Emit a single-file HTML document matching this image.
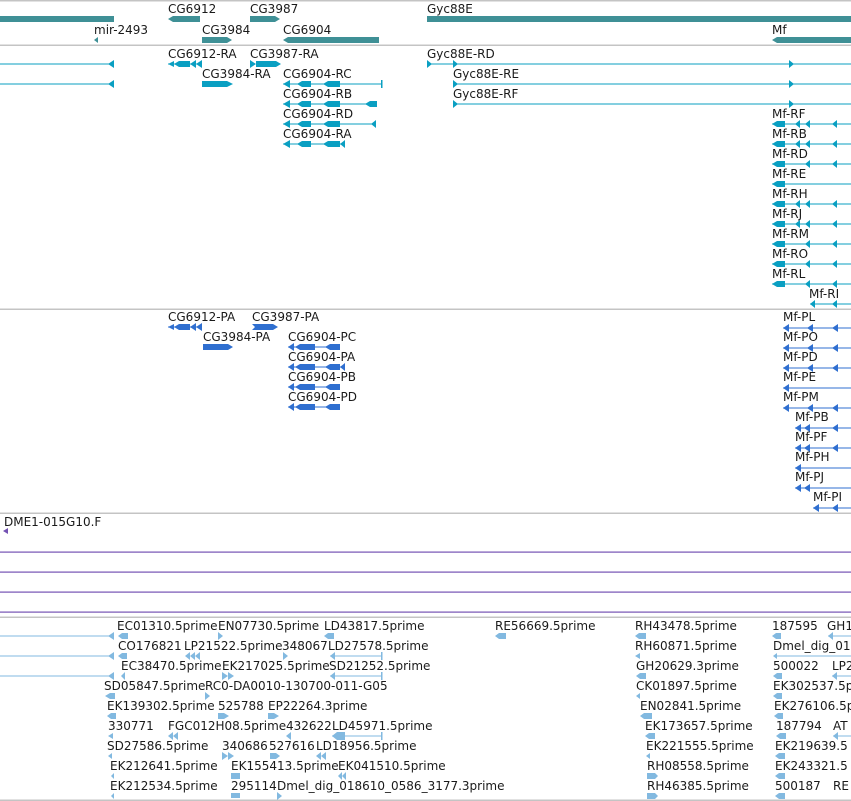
<!DOCTYPE html>
<html><head><meta charset="utf-8"><style>
html,body{margin:0;padding:0;background:#fff;width:851px;height:801px;overflow:hidden}
svg{display:block}
text{font-family:"DejaVu Sans","Liberation Sans",sans-serif;font-size:12px;fill:#1a1a1a}
.g{fill:#3f9096}.t{fill:#0a9fc2}.p{fill:#2f6fd0}.e{fill:#82b9e0}.v{fill:#7452b3}
</style></head><body>
<svg width="851" height="801" viewBox="0 0 851 801">
<!-- separators -->
<rect x="0" y="0" width="851" height="1.5" fill="#c4c4c4"/>
<rect x="0" y="44.5" width="851" height="1.5" fill="#c4c4c4"/>
<rect x="0" y="308.5" width="851" height="1.5" fill="#c4c4c4"/>
<rect x="0" y="512.5" width="851" height="1.5" fill="#c4c4c4"/>
<rect x="0" y="616.5" width="851" height="1.5" fill="#c4c4c4"/>
<rect x="0" y="799.5" width="851" height="1.5" fill="#c4c4c4"/>

<!-- genes -->
<g class="g">
<rect x="0" y="16" width="114" height="6"/>
<polygon points="168,19 173,16 200,16 200,22 173,22"/>
<polygon points="250,16 275,16 280,19 275,22 250,22"/>
<rect x="427" y="16" width="424" height="6"/>
<polygon points="94,40 98,37 98,43"/>
<polygon points="202,37 227,37 232,40 227,43 202,43"/>
<polygon points="283,40 288,37 379,37 379,43 288,43"/>
<polygon points="772,40 777,37 851,37 851,43 777,43"/>
</g>
<text x="168" y="13">CG6912</text><text x="250" y="13">CG3987</text><text x="427" y="13">Gyc88E</text>
<text x="94" y="34">mir-2493</text><text x="202" y="34">CG3984</text><text x="283" y="34">CG6904</text><text x="772" y="34">Mf</text>

<!-- transcripts -->
<g class="t">
<rect x="0" y="63.5" width="114" height="1"/><polygon points="108,64 114,60 114,68"/>
<rect x="0" y="83.5" width="114" height="1"/><polygon points="108,84 114,80 114,88"/>
<rect x="168" y="63.5" width="34" height="1"/><polygon points="168,64 174,61 174,67"/><polygon points="174,64 179,61 190,61 190,67 179,67"/><polygon points="190,64 196,60 196,68"/><polygon points="196,64 202,60 202,68"/>
<polygon points="250,60 256,64 250,68"/><polygon points="256,61 276,61 281,64 276,67 256,67"/>
<rect x="427" y="63.5" width="424" height="1"/><polygon points="427,60 432,64 427,68"/><polygon points="453,60 458,64 453,68"/><polygon points="789,60 794,64 789,68"/>
<polygon points="202,81 227,81 233,84 227,87 202,87"/>
<rect x="453" y="83.5" width="398" height="1"/><polygon points="453,80 458,84 453,88"/><polygon points="789,80 794,84 789,88"/>
<rect x="453" y="103.5" width="398" height="1"/><polygon points="453,100 458,104 453,108"/><polygon points="789,100 794,104 789,108"/>
<!-- CG6904 -->
<rect x="283" y="83.5" width="99" height="1"/><polygon points="283,84 290,80 290,88"/><polygon points="297,84 302,81 311,81 311,87 302,87"/><polygon points="323,84 328,81 340,81 340,87 328,87"/><rect x="381" y="80" width="1.5" height="8"/>
<rect x="283" y="103.5" width="94" height="1"/><polygon points="283,104 290,100 290,108"/><polygon points="297,104 302,101 311,101 311,107 302,107"/><polygon points="323,104 328,101 340,101 340,107 328,107"/><polygon points="365,104 370,101 377,101 377,107 370,107"/>
<rect x="283" y="123.5" width="93" height="1"/><polygon points="283,124 290,120 290,128"/><polygon points="297,124 302,121 311,121 311,127 302,127"/><polygon points="323,124 328,121 340,121 340,127 328,127"/><polygon points="371,124 376,120 376,128"/>
<rect x="283" y="143.5" width="62" height="1"/><polygon points="283,144 290,140 290,148"/><polygon points="297,144 302,141 311,141 311,147 302,147"/><polygon points="323,144 328,141 340,141 340,147 328,147"/><polygon points="340,144 345,140 345,148"/>
<!-- Mf -->
<g id="mf1"><rect x="772" y="123.5" width="79" height="1"/><polygon points="772,124 777,121 785,121 785,127 777,127"/><polygon points="795,124 800,120 800,128"/><polygon points="805,124 810,120 810,128"/><polygon points="832,124 837,120 837,128"/></g>
<use href="#mf1" y="20"/>
<g transform="translate(0,40)"><rect x="772" y="123.5" width="79" height="1"/><polygon points="772,124 777,121 785,121 785,127 777,127"/><polygon points="805,124 810,120 810,128"/><polygon points="832,124 837,120 837,128"/></g>
<g transform="translate(0,60)"><rect x="772" y="123.5" width="79" height="1"/><polygon points="772,124 777,121 785,121 785,127 777,127"/></g>
<use href="#mf1" y="80"/><use href="#mf1" y="100"/>
<g transform="translate(0,120)"><rect x="772" y="123.5" width="79" height="1"/><polygon points="772,124 777,121 785,121 785,127 777,127"/><polygon points="805,124 810,120 810,128"/><polygon points="832,124 837,120 837,128"/></g>
<g transform="translate(0,140)"><rect x="772" y="123.5" width="79" height="1"/><polygon points="772,124 777,121 785,121 785,127 777,127"/><polygon points="805,124 810,120 810,128"/><polygon points="832,124 837,120 837,128"/></g>
<g transform="translate(0,160)"><rect x="772" y="123.5" width="79" height="1"/><polygon points="772,124 777,121 785,121 785,127 777,127"/><polygon points="805,124 810,120 810,128"/><polygon points="832,124 837,120 837,128"/></g>
<rect x="810" y="303.5" width="41" height="1"/><polygon points="810,304 815,300 815,308"/><polygon points="832,304 837,300 837,308"/>
</g>
<text x="168" y="58">CG6912-RA</text><text x="250" y="58">CG3987-RA</text><text x="427" y="58">Gyc88E-RD</text>
<text x="202" y="78">CG3984-RA</text><text x="283" y="78">CG6904-RC</text><text x="453" y="78">Gyc88E-RE</text>
<text x="283" y="98">CG6904-RB</text><text x="453" y="98">Gyc88E-RF</text>
<text x="283" y="118">CG6904-RD</text><text x="772" y="118">Mf-RF</text>
<text x="283" y="138">CG6904-RA</text><text x="772" y="138">Mf-RB</text>
<text x="772" y="158">Mf-RD</text><text x="772" y="178">Mf-RE</text><text x="772" y="198">Mf-RH</text><text x="772" y="218">Mf-RJ</text><text x="772" y="238">Mf-RM</text><text x="772" y="258">Mf-RO</text><text x="772" y="278">Mf-RL</text><text x="809" y="298">Mf-RI</text>

<!-- proteins -->
<g class="p">
<rect x="168" y="326.5" width="34" height="1"/><polygon points="168,327 174,324 174,330"/><polygon points="174,327 179,324 190,324 190,330 179,330"/><polygon points="190,327 196,323 196,331"/><polygon points="196,327 202,323 202,331"/>
<polygon points="252,324 273,324 278,327 273,330 252,330 255,327"/>
<polygon points="203,344 228,344 233,347 228,350 203,350"/>
<g id="pc"><rect x="288" y="346.5" width="52" height="1"/><polygon points="288,347 294,343 294,351"/><polygon points="295,347 300,344 315,344 315,350 300,350"/><polygon points="325,347 330,344 340,344 340,350 330,350"/></g>
<g transform="translate(0,20)"><rect x="288" y="346.5" width="57" height="1"/><polygon points="288,347 294,343 294,351"/><polygon points="295,347 300,344 315,344 315,350 300,350"/><polygon points="325,347 330,344 340,344 340,350 330,350"/><polygon points="340,347 345,343 345,351"/></g>
<use href="#pc" y="40"/><use href="#pc" y="60"/>
<g id="mp1"><rect x="783" y="327.5" width="68" height="1"/><polygon points="783,328 789,324 789,332"/><polygon points="807,328 813,324 813,332"/><polygon points="832,328 838,324 838,332"/></g>
<use href="#mp1" y="20"/><use href="#mp1" y="40"/>
<g transform="translate(0,60)"><rect x="783" y="327.5" width="68" height="1"/><polygon points="783,328 789,324 789,332"/></g>
<use href="#mp1" y="80"/>
<g id="mp2" transform="translate(0,100)"><rect x="795" y="327.5" width="56" height="1"/><polygon points="795,328 801,324 801,332"/><polygon points="804,328 810,324 810,332"/><polygon points="832,328 838,324 838,332"/></g>
<g transform="translate(0,120)"><rect x="795" y="327.5" width="56" height="1"/><polygon points="795,328 801,324 801,332"/><polygon points="804,328 810,324 810,332"/><polygon points="832,328 838,324 838,332"/></g>
<g transform="translate(0,140)"><rect x="795" y="327.5" width="56" height="1"/><polygon points="795,328 801,324 801,332"/></g>
<g transform="translate(0,160)"><rect x="795" y="327.5" width="56" height="1"/><polygon points="795,328 801,324 801,332"/><polygon points="804,328 810,324 810,332"/></g>
<g transform="translate(0,180)"><rect x="813" y="327.5" width="38" height="1"/><polygon points="813,328 819,324 819,332"/><polygon points="832,328 838,324 838,332"/></g>
</g>
<text x="168" y="321">CG6912-PA</text><text x="252" y="321">CG3987-PA</text>
<text x="203" y="341">CG3984-PA</text><text x="288" y="341">CG6904-PC</text>
<text x="288" y="361">CG6904-PA</text><text x="288" y="381">CG6904-PB</text><text x="288" y="401">CG6904-PD</text>
<text x="783" y="321">Mf-PL</text><text x="783" y="341">Mf-PO</text><text x="783" y="361">Mf-PD</text><text x="783" y="381">Mf-PE</text><text x="783" y="401">Mf-PM</text>
<text x="795" y="421">Mf-PB</text><text x="795" y="441">Mf-PF</text><text x="795" y="461">Mf-PH</text><text x="795" y="481">Mf-PJ</text><text x="813" y="501">Mf-PI</text>

<!-- DME -->
<text x="4" y="526">DME1-015G10.F</text>
<polygon class="v" points="3,531 8,528 8,534"/>
<rect class="v" x="0" y="551.5" width="851" height="1.2"/>
<rect class="v" x="0" y="571.5" width="851" height="1.2"/>
<rect class="v" x="0" y="591.5" width="851" height="1.2"/>
<rect class="v" x="0" y="611.5" width="851" height="1.2"/>

<!-- ESTs -->
<g class="e">
<rect x="0" y="635.5" width="114" height="1"/><polygon points="108,636 114,632 114,640"/>
<rect x="0" y="655.5" width="114" height="1"/><polygon points="108,656 114,652 114,660"/>
<rect x="0" y="675.5" width="114" height="1"/><polygon points="108,676 114,672 114,680"/>
<polygon points="118,636 122,633 128,633 128,639 122,639"/><polygon points="218,632 223,636 218,640"/><polygon points="324,636 328,633 334,633 334,639 328,639"/>
<polygon points="495,636 499,633 506,633 506,639 499,639"/><polygon points="635,636 639,633 646,633 646,639 639,639"/><polygon points="772,636 776,633 781,633 781,639 776,639"/>
<rect x="828" y="635.5" width="23" height="1"/><polygon points="828,636 833,632 833,640"/>
<polygon points="118,656 122,653 127,653 127,659 122,659"/><polygon points="185,656 190,652 190,660"/><polygon points="190,656 195,652 195,660"/><polygon points="195,656 200,652 200,660"/><polygon points="283,652 288,656 283,660"/>
<rect x="330" y="655.5" width="52" height="1"/><polygon points="330,656 335,652 335,660"/><rect x="381" y="652" width="1.5" height="8"/>
<polygon points="635,656 640,653 640,659"/><polygon points="773,656 777,653 777,659"/><rect x="775" y="655.5" width="76" height="1"/>
<polygon points="121,676 125,672 125,680"/><polygon points="222,672 228,676 222,680"/><polygon points="228,672 234,676 228,680"/>
<rect x="330" y="675.5" width="52" height="1"/><polygon points="330,676 335,672 335,680"/><rect x="381" y="672" width="1.5" height="8"/>
<polygon points="636,676 640,673 646,673 646,679 640,679"/><polygon points="773,676 777,673 782,673 782,679 777,679"/><rect x="832" y="675.5" width="19" height="1"/><polygon points="832,676 837,672 837,680"/>
<polygon points="105,696 110,693 115,693 115,699 110,699"/><polygon points="205,692 210,696 205,700"/><polygon points="636,696 640,693 640,699"/><polygon points="773,696 777,693 782,693 782,699 777,699"/>
<polygon points="107,716 111,713 116,713 116,719 111,719"/><polygon points="218,713 224,713 229,716 224,719 218,719"/><polygon points="268,713 274,713 279,716 274,719 268,719"/><polygon points="640,716 644,713 652,713 652,719 644,719"/><polygon points="774,716 778,713 783,713 783,719 778,719"/>
<polygon points="108,736 113,733 113,739"/><polygon points="168,736 173,732 173,740"/><polygon points="173,736 178,732 178,740"/><polygon points="286,736 291,732 291,740"/>
<rect x="332" y="735.5" width="50" height="1"/><polygon points="332,736 337,732 345,732 345,740 337,740"/><rect x="381" y="732" width="1.5" height="8"/>
<polygon points="645,736 649,733 655,733 655,739 649,739"/><polygon points="776,736 780,733 786,733 786,739 780,739"/><rect x="833" y="735.5" width="18" height="1"/><polygon points="833,736 838,732 838,740"/>
<polygon points="108,756 112,753 112,759"/><polygon points="222,752 228,756 222,760"/><polygon points="228,752 234,756 228,760"/><polygon points="270,753 276,753 280,756 276,759 270,759"/><polygon points="316,756 321,752 321,760"/><polygon points="321,756 326,752 326,760"/><polygon points="646,756 650,753 650,759"/><polygon points="775,756 779,753 785,753 785,759 779,759"/>
<polygon points="111,776 114,773 114,779"/><rect x="231" y="773" width="9" height="6"/><polygon points="338,776 342,772 342,780"/><polygon points="342,776 346,772 346,780"/><polygon points="647,773 655,773 658,776 655,779 647,779"/><polygon points="775,776 779,773 785,773 785,779 779,779"/>
<polygon points="111,796 114,793 114,799"/><rect x="231" y="793" width="9" height="5"/><polygon points="277,792 282,796 277,800"/><polygon points="647,793 655,793 658,796 655,799 647,799"/><polygon points="775,796 779,793 785,793 785,799 779,799"/>
</g>
<text x="117" y="630">EC01310.5prime</text><text x="218" y="630">EN07730.5prime</text><text x="324" y="630">LD43817.5prime</text><text x="495" y="630">RE56669.5prime</text><text x="635" y="630">RH43478.5prime</text><text x="772" y="630">187595</text><text x="827" y="630">GH1</text>
<text x="118" y="650">CO176821</text><text x="184" y="650">LP21522.5prime</text><text x="282" y="650">348067</text><text x="328" y="650">LD27578.5prime</text><text x="635" y="650">RH60871.5prime</text><text x="773" y="650">Dmel_dig_01-</text>
<text x="121" y="670">EC38470.5prime</text><text x="222" y="670">EK217025.5prime</text><text x="329" y="670">SD21252.5prime</text><text x="636" y="670">GH20629.3prime</text><text x="773" y="670">500022</text><text x="832" y="670">LP2</text>
<text x="104" y="690">SD05847.5prime</text><text x="205" y="690">RC0-DA0010-130700-011-G05</text><text x="636" y="690">CK01897.5prime</text><text x="773" y="690">EK302537.5p</text>
<text x="107" y="710">EK139302.5prime</text><text x="218" y="710">525788</text><text x="268" y="710">EP22264.3prime</text><text x="640" y="710">EN02841.5prime</text><text x="774" y="710">EK276106.5p</text>
<text x="108" y="730">330771</text><text x="168" y="730">FGC012H08.5prime</text><text x="286" y="730">432622</text><text x="332" y="730">LD45971.5prime</text><text x="645" y="730">EK173657.5prime</text><text x="776" y="730">187794</text><text x="833" y="730">AT</text>
<text x="107" y="750">SD27586.5prime</text><text x="222" y="750">340686</text><text x="269" y="750">527616</text><text x="316" y="750">LD18956.5prime</text><text x="646" y="750">EK221555.5prime</text><text x="775" y="750">EK219639.5</text>
<text x="110" y="770">EK212641.5prime</text><text x="231" y="770">EK155413.5prime</text><text x="338" y="770">EK041510.5prime</text><text x="647" y="770">RH08558.5prime</text><text x="775" y="770">EK243321.5</text>
<text x="110" y="790">EK212534.5prime</text><text x="231" y="790">295114</text><text x="277" y="790">Dmel_dig_018610_0586_3177.3prime</text><text x="647" y="790">RH46385.5prime</text><text x="775" y="790">500187</text><text x="833" y="790">RE</text>
</svg>
</body></html>
